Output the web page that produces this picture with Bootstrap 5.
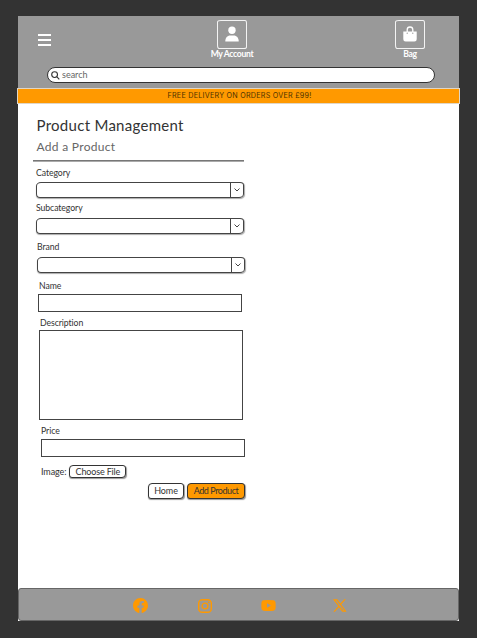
<!DOCTYPE html>
<html lang="en">
<head>
<meta charset="utf-8">
<meta name="viewport" content="width=device-width, initial-scale=1">
<title>Product Management</title>
<link href="https://cdn.jsdelivr.net/npm/bootstrap@5.3.0/dist/css/bootstrap.min.css" rel="stylesheet">
<style>
body{background:#333;font-family:Lato,"Open Sans",sans-serif;font-size:9px;line-height:12px;color:#333;height:638px;overflow:hidden;font-variant-ligatures:none}
svg{display:block}
.screen{width:441px;height:605px;margin:16px 0 0 18px}
.site-head{height:72px;background:#999}
.menu-btn{width:14px;margin:18px 0 0 20px}
.head-row{height:51px}
.tile{width:60px;color:#fff;font-weight:700;margin-top:4px}
.tile-box{width:30px;height:29px;border:1px solid #f4f4f4;border-radius:4px 2px 3px 2px / 2px 3px 2px 4px}
.tile-account{margin-left:150px}
.tile-bag{margin-right:19px}
.tile-name{line-height:10px;white-space:nowrap;font-size:8.600px;letter-spacing:-.32px}
.search-box{width:388px;height:16px;margin-left:29px;border:1px solid #333;border-radius:8px;background:#fff;padding:0 0 0 3px}
.search-box input{font-size:9px;line-height:12px;height:12px;margin:-1px 0 0 2px;color:#666;outline:0}
.search-box input::placeholder{color:#666;opacity:1}
.promo{height:16px;background:#f90;border:1px solid #e0d6c6;margin:0 -1px;font-family:Inter,sans-serif;font-size:7.200px;letter-spacing:.24px;line-height:14px;color:#4d3300;padding-left:2px}
.main-area{padding:12px 0 0 15px}
.heading{font-size:15px;line-height:19px;margin:0 0 4px 3.500px;letter-spacing:.28px;font-weight:400}
.subheading{font-size:12px;line-height:16px;margin:0 0 5px 3.500px;color:#666;letter-spacing:.3px;font-weight:400}
.rule{width:211px;height:2px;background:linear-gradient(#777 50%,#aaa 50%)}
.field-label{display:block;font-size:8.700px;line-height:12px;height:12px;margin:0;letter-spacing:-.08px}
.pick{width:208px;height:16px;border:1px solid #444;border-radius:5px 4px 5px 4px / 4px 3px 4px 4px;box-shadow:.5px 1px 1px #aaa}
.pick-arrow{width:13px;border-left:1px solid #444}
.box{display:block;width:204px;height:18px;border:1px solid #444;border-radius:0;background:#fff;resize:none;padding:0 4px}
.box-tall{height:90px}
.g1{margin:5px 0 0 3px}.g1 .pick{margin-top:3px}
.g2{margin:4px 0 0 3px}.g2 .pick{margin-top:4px}
.g3{margin:7px 0 0 4px}.g3 .pick{margin-top:4px}
.g4{margin:7px 0 0 5px}.g4 .field-label{padding-left:1px}.g4 .box{margin-top:2px}
.g5{margin:5px 0 0 6px}.g5 .field-label{padding-left:1px}.g5 .box{margin-top:1px}
.g6{margin:5px 0 0 8px}.g6 .box{margin-top:2px}
.sk-btn{font-size:9px;line-height:12px;padding:0;border:1px solid #333;border-radius:4px 3px 4px 3px;color:#333;background:#fff;box-shadow:.5px 1px 1px #999;white-space:nowrap;letter-spacing:-.1px}
.file-row{height:13px;margin:8px 0 0 8px;letter-spacing:-.1px}
.file-btn{width:57px;height:13px;line-height:9px;margin-left:3px;letter-spacing:-.15px}
.action-row{margin:5px 0 0 115px;gap:3px}
.home-btn{width:36px;height:16px}
.add-btn{width:58px;height:16px;background:#f90;letter-spacing:-.45px}
.site-foot{height:33px;background:#999;border:1px solid #666;border-radius:3px;padding:2px 0 0 114px;color:#f90}
.ic-insta{margin-left:50px}
.ic-tube{margin-left:49px}
.ic-x{margin-left:57px}
</style>
<script src="https://cdn.jsdelivr.net/npm/bootstrap@5.3.0/dist/js/bootstrap.bundle.min.js"></script>
</head>
<body>
<div class="screen bg-white d-flex flex-column">
  <header class="site-head">
    <div class="head-row d-flex align-items-start">
      <a href="#" class="menu-btn" aria-label="Menu"><svg width="14" height="12"><path d="M0 1h13M0 6h13M0 11h13" stroke="#fff" stroke-width="1.8"/></svg></a>
      <a href="#" class="tile tile-account d-flex flex-column align-items-center text-decoration-none">
        <span class="tile-box d-flex align-items-center justify-content-center"><svg width="14" height="18" viewBox="0 0 14 18" fill="#fff"><circle cx="7" cy="4.200" r="3.700"/><path d="M.3 15.400c0-3.600 2-5.900 5-5.900h3.400c3 0 5 2.300 5 5.900z"/></svg></span>
        <span class="tile-name">My Account</span>
      </a>
      <a href="#" class="tile tile-bag d-flex flex-column align-items-center text-decoration-none ms-auto">
        <span class="tile-box d-flex align-items-center justify-content-center"><svg width="14" height="18" viewBox="0 0 14 18"><path d="M4.200 7V3.800a2.800 2.800 0 0 1 5.600 0V7" fill="none" stroke="#fff" stroke-width="1.300"/><path d="M.3 5.400h13.400v7.800a2.300 2.300 0 0 1-2.300 2.300H2.600A2.300 2.300 0 0 1 .3 13.200z" fill="#fff"/><circle cx="4.200" cy="7.200" r=".6" fill="#888"/><circle cx="9.800" cy="7.200" r=".6" fill="#888"/></svg></span>
        <span class="tile-name">Bag</span>
      </a>
    </div>
    <div class="search-box d-flex align-items-center">
      <svg width="9" height="9" viewBox="0 0 9 9" fill="none" stroke="#333" stroke-width="1.100"><circle cx="3.600" cy="3.600" r="2.900"/><path d="M5.700 5.700L8.300 8.300"/></svg>
      <input class="border-0 bg-transparent p-0 flex-grow-1" type="text" placeholder="search" aria-label="search">
    </div>
  </header>
  <div class="promo text-center">FREE DELIVERY ON ORDERS OVER £99!</div>
  <main class="main-area flex-grow-1">
    <h1 class="heading">Product Management</h1>
    <h2 class="subheading">Add a Product</h2>
    <div class="rule"></div>
    <form>
      <div class="g1"><label class="field-label">Category</label><div class="pick d-flex justify-content-end"><span class="pick-arrow d-flex align-items-center justify-content-center"><svg width="6" height="4"><path d="M.5.5L3 3 5.500.5" fill="none" stroke="#444"/></svg></span></div></div>
      <div class="g2"><label class="field-label">Subcategory</label><div class="pick d-flex justify-content-end"><span class="pick-arrow d-flex align-items-center justify-content-center"><svg width="6" height="4"><path d="M.5.5L3 3 5.500.5" fill="none" stroke="#444"/></svg></span></div></div>
      <div class="g3"><label class="field-label">Brand</label><div class="pick d-flex justify-content-end"><span class="pick-arrow d-flex align-items-center justify-content-center"><svg width="6" height="4"><path d="M.5.5L3 3 5.500.5" fill="none" stroke="#444"/></svg></span></div></div>
      <div class="g4"><label class="field-label" for="name">Name</label><input id="name" class="box" type="text"></div>
      <div class="g5"><label class="field-label" for="desc">Description</label><textarea id="desc" class="box box-tall"></textarea></div>
      <div class="g6"><label class="field-label" for="price">Price</label><input id="price" class="box" type="text"></div>
      <div class="file-row d-flex align-items-center"><span>Image:</span><button type="button" class="sk-btn file-btn">Choose File</button></div>
      <div class="action-row d-flex"><button type="button" class="sk-btn home-btn">Home</button><button type="button" class="sk-btn add-btn">Add Product</button></div>
    </form>
  </main>
  <footer class="site-foot d-flex align-items-center">
    <svg width="15" height="15" viewBox="0 0 16 16" fill="currentColor"><path d="M16 8.050C16 3.600 12.400 0 8 0S0 3.600 0 8.050c0 4 2.900 7.350 6.750 7.950v-5.620H4.720V8.050h2.030V6.280c0-2 1.200-3.120 3.020-3.120.88 0 1.800.16 1.800.16V5.300h-1.010c-1 0-1.310.62-1.310 1.260v1.490h2.220l-.35 2.330H9.250V16C13.080 15.400 16 12.060 16 8.050z"/></svg>
    <svg class="ic-insta" width="14" height="14" viewBox="0 0 14 14" fill="none" stroke="currentColor" stroke-width="1.400"><rect x=".7" y=".7" width="12.600" height="12.600" rx="3.600"/><circle cx="7" cy="7" r="2.900"/><circle cx="10.700" cy="3.300" r=".5" fill="currentColor" stroke-width=".6"/></svg>
    <svg class="ic-tube" width="15" height="11" viewBox="0 0 15 11"><path fill="currentColor" fill-rule="evenodd" d="M2.500.3Q7.500-.2 12.500.3 14.200.5 14.500 2.200q.4 3.300 0 6.600-.3 1.700-2 1.900-5 .5-10 0-1.700-.2-2-1.900-.4-3.300 0-6.600Q.8.500 2.500.3zM6 3.200v4.600l3.900-2.300z"/></svg>
    <svg class="ic-x" width="14" height="13" viewBox="0 0 14 13"><path fill="currentColor" fill-rule="evenodd" d="M0 .2h4.300l3.200 4.400L11.300.2h1.500L8.200 5.600l5.400 7.200H9.300L5.900 8.200 1.900 12.800H.4l4.800-5.500zM2.300 1.400l7.600 10.200h1.400L3.800 1.400z"/></svg>
  </footer>
</div>
</body>
</html>
